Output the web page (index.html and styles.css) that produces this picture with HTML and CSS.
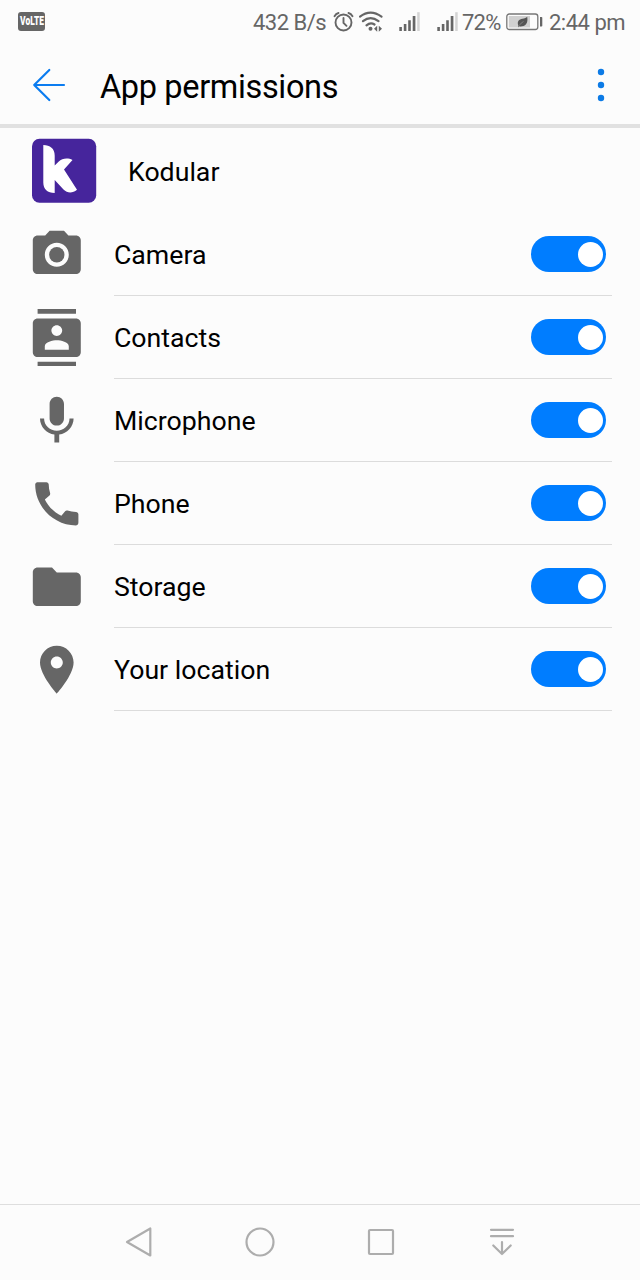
FILE: index.html
```html
<!DOCTYPE html>
<html lang="en">
<head>
<meta charset="utf-8">
<title>App permissions</title>
<link rel="stylesheet" href="styles.css">
</head>
<body>
<div class="screen">
  <div class="status">
    <span class="volte"><span class="volte-text">VoLTE</span></span>
    <span class="speed">432 B/s</span>
    <svg class="alarm" width="22" height="24" viewBox="0 0 22 24" fill="none" stroke="#666" stroke-width="1.9" stroke-linecap="round"><circle cx="10.500" cy="12.500" r="8"/><path d="M10.500 8v4.800l3 3M1.500 6.200Q2.900 3.600 5.500 3M19.500 6.200Q18.100 3.600 15.500 3"/></svg>
    <svg class="wifi" width="26" height="24" viewBox="0 0 26 24" fill="none" stroke="#666" stroke-width="2.200" stroke-linecap="round"><path d="M1 6.700Q11.500 -1.300 22.500 6.700M4 11.200Q11.500 5 19.500 11.200M7.500 15.300Q11.500 11.800 15.500 14.500"/><circle cx="11.500" cy="18.800" r="2" fill="#666" stroke="none"/><path d="M18.200 15.700v6l-3.200-3zM19.800 15.700v6l3.200-3z" fill="#666" stroke="none"/></svg>
    <svg class="signal" width="22" height="22" viewBox="0 0 22 22"><path d="M.3 16h2.600v4H.3zM4.800 13h2.600v7H4.800zM9.200 9.200h2.600V20H9.200zM13.700 5h2.700v15h-2.700z" fill="#666"/><path d="M18.200 1.200h2.500V20h-2.500z" fill="#d4d4d4"/></svg>
    <svg class="signal second" width="22" height="22" viewBox="0 0 22 22"><path d="M.3 16h2.600v4H.3zM4.800 13h2.600v7H4.800zM9.200 9.200h2.600V20H9.200zM13.700 5h2.700v15h-2.700z" fill="#666"/><path d="M18.200 1.200h2.500V20h-2.500z" fill="#d4d4d4"/></svg>
    <span class="percent">72%</span>
    <svg class="battery" width="38" height="20" viewBox="0 0 38 20"><rect x=".8" y="2" width="31" height="15.500" rx="2.500" fill="#fcfcfc" stroke="#777" stroke-width="1.300"/><path d="M2.800 4H24v11.500H2.800z" fill="#d0d0d0"/><path d="M34 5h1.500q.800 0 .800.800v8q0 .800-.800.800H34z" fill="#666"/><path d="M12.300 13.500C10.800 9.500 13 7.300 16.500 6.800C18.700 6.500 20 5.800 21.200 4.800C22 9.500 20.800 13 17.500 14C15.500 14.600 14 14.500 13.200 14.200L12.300 15.500Z" fill="#555"/><path d="M13.200 13.500Q15 10.800 17.500 9.500" fill="none" stroke="#aaa" stroke-width=".5"/></svg>
    <span class="time">2:44 pm</span>
  </div>

  <div class="header">
    <svg class="back" width="34" height="34" viewBox="0 0 34 34" fill="none" stroke="#0b7cf0" stroke-width="2.200" stroke-linecap="round" stroke-linejoin="round"><path d="M32 17H2.200M17.300 2L2.200 17l15.100 15"/></svg>
    <h1 class="title">App permissions</h1>
    <svg class="more" width="8" height="34" viewBox="0 0 8 34" fill="#0c7be6"><circle cx="4" cy="4" r="3.200"/><circle cx="4" cy="17" r="3.200"/><circle cx="4" cy="30" r="3.200"/></svg>
  </div>

  <div class="app">
    <svg class="logo" width="65" height="65" viewBox="0 0 65 65"><rect x="0" y=".7" width="64.200" height="64" rx="7.500" fill="#46259c"/><path d="M11.300 7C18 7 22.700 10.500 22.700 17.500V27.500L26.500 23.700C30.500 20 36 19.800 40.500 22L32 31.500L45 51.800C40.500 55.500 35.500 55.500 31.500 51.500L22.700 42V55C15.500 55 11.300 51 11.300 44.500Z" fill="#fff"/></svg>
    <span class="label appname">Kodular</span>
  </div>

  <div class="list">
    <div class="row">
      <svg class="icon" viewBox="0 0 24 24"><circle cx="12" cy="12" r="3.200"/><path d="M9 2L7.170 4H4c-1.100 0-2 .9-2 2v12c0 1.100.9 2 2 2h16c1.100 0 2-.9 2-2V6c0-1.100-.9-2-2-2h-3.170L15 2H9zm3 15c-2.760 0-5-2.240-5-5s2.240-5 5-5 5 2.240 5 5-2.240 5-5 5z"/></svg>
      <div class="body"><span class="label">Camera</span><span class="toggle"></span></div>
    </div>
    <div class="row">
      <svg class="icon" viewBox="0 0 24 24"><path d="M20 0H4v2h16V0zM4 24h16v-2H4v2zM20 4H4c-1.100 0-2 .9-2 2v12c0 1.100.9 2 2 2h16c1.100 0 2-.9 2-2V6c0-1.100-.9-2-2-2zm-8 2.750c1.240 0 2.250 1.010 2.250 2.250s-1.010 2.250-2.250 2.250S9.750 10.240 9.750 9 10.760 6.750 12 6.750zM17 17H7v-1.500c0-1.670 3.330-2.500 5-2.500s5 .83 5 2.500V17z"/></svg>
      <div class="body"><span class="label">Contacts</span><span class="toggle"></span></div>
    </div>
    <div class="row">
      <svg class="icon" viewBox="0 0 24 24"><path d="M12 14c1.660 0 2.990-1.340 2.990-3L15 5c0-1.660-1.340-3-3-3S9 3.340 9 5v6c0 1.660 1.340 3 3 3zm5.300-3c0 3-2.540 5.100-5.300 5.100S6.700 14 6.700 11H5c0 3.410 2.720 6.230 6 6.720V21h2v-3.280c3.280-.48 6-3.300 6-6.720h-1.700z"/></svg>
      <div class="body"><span class="label">Microphone</span><span class="toggle"></span></div>
    </div>
    <div class="row">
      <svg class="icon" viewBox="0 0 24 24"><path d="M20.010 15.380c-1.230 0-2.420-.2-3.530-.56-.35-.12-.74-.03-1.010.24l-1.570 1.970c-2.830-1.350-5.480-3.900-6.890-6.830l1.950-1.660c.27-.28.35-.67.24-1.020-.37-1.110-.56-2.300-.56-3.530 0-.54-.45-.99-.99-.99H4.190C3.650 3 3 3.240 3 3.990 3 13.280 10.730 21 20.010 21c.71 0 .99-.63.99-1.180v-3.450c0-.54-.45-.99-.99-.99z"/></svg>
      <div class="body"><span class="label">Phone</span><span class="toggle"></span></div>
    </div>
    <div class="row">
      <svg class="icon" viewBox="0 0 24 24"><path d="M10 4H4c-1.100 0-1.990.9-1.990 2L2 18c0 1.100.9 2 2 2h16c1.100 0 2-.9 2-2V8c0-1.100-.9-2-2-2h-8l-2-2z"/></svg>
      <div class="body"><span class="label">Storage</span><span class="toggle"></span></div>
    </div>
    <div class="row">
      <svg class="icon" viewBox="0 0 24 24"><path d="M12 2C8.130 2 5 5.130 5 9c0 5.250 7 13 7 13s7-7.750 7-13c0-3.870-3.130-7-7-7zm0 9.500c-1.380 0-2.500-1.120-2.500-2.500s1.120-2.500 2.500-2.500 2.500 1.120 2.500 2.500-1.120 2.500-2.500 2.500z"/></svg>
      <div class="body"><span class="label">Your location</span><span class="toggle"></span></div>
    </div>
  </div>

  <div class="nav">
    <svg class="navicon" viewBox="0 0 36 36"><path d="M29.300 4.500v27L6 18z"/></svg>
    <svg class="navicon" viewBox="0 0 36 36"><circle cx="18" cy="18" r="13.500"/></svg>
    <svg class="navicon" viewBox="0 0 36 36"><rect x="6" y="6" width="24" height="24" rx="1"/></svg>
    <svg class="navicon" viewBox="0 0 36 36"><path d="M7 5.800h22M7 12.200h22M18 18v12M9.300 21.500l8.700 8.500 8.700-8.500"/></svg>
  </div>
</div>
</body>
</html>
```
FILE: styles.css
```css
* { box-sizing: border-box; }
body { margin: 0; background: #fcfcfc; font-family: Roboto, "Liberation Sans", sans-serif; color: #000; }
svg { display: block; flex: none; }
.screen { display: flex; flex-direction: column; width: 640px; height: 1280px; overflow: hidden; }

.status { display: flex; align-items: center; height: 44px; padding-left: 18px; font-size: 22px; color: #666; white-space: nowrap; }
.volte { display: flex; align-items: center; justify-content: center; width: 27px; height: 19px; margin-top: -1px; border-radius: 3px; background: #666; color: #fff; }
.volte-text { font-size: 12px; font-weight: 900; line-height: 19px; transform: scaleX(0.7); }
.speed { width: 80px; margin-left: 208px; letter-spacing: -0.5px; }
.wifi { margin-left: 4px; }
.signal { margin-left: 14px; }
.signal.second { margin-left: 16px; }
.percent { width: 44px; margin-left: 3px; letter-spacing: -0.8px; }
.battery { margin-right: 5px; }
.time { letter-spacing: -0.5px; }

.header { display: flex; align-items: center; height: 84px; padding: 2px 35px 0 32px; border-bottom: 4px solid #e1e1e1; }
.title { flex: 1; margin: 3px 0 0 34px; font-size: 32.5px; font-weight: 400; line-height: 40px; letter-spacing: -0.35px; }

.app { display: flex; align-items: center; height: 85px; padding-left: 32px; }
.label { font-size: 26.7px; line-height: 34px; }
.appname { margin: 3px 0 0 31px; }

.row { display: flex; align-items: center; height: 83px; padding: 0 28px; }
.icon { width: 57.6px; height: 57.6px; fill: #666; }
.body { display: flex; flex: 1; align-items: center; justify-content: space-between; height: 83px; margin-left: 28.4px; padding-right: 5.6px; border-bottom: 1px solid #dcdcdc; }
.body .label { margin-top: 2px; }
.toggle { display: flex; align-items: center; justify-content: flex-end; width: 75px; height: 36px; padding-right: 3.4px; border-radius: 18px; background: #007dff; }
.toggle::after { content: ""; width: 25px; height: 25px; border-radius: 50%; background: #fff; }

.nav { display: flex; gap: 85px; align-items: center; height: 76px; margin-top: auto; padding: 0 0 2px 120.5px; border-top: 1px solid #dedede; }
.navicon { width: 36px; height: 36px; fill: none; stroke: #adadad; stroke-width: 2.2; stroke-linecap: round; stroke-linejoin: round; }
```
